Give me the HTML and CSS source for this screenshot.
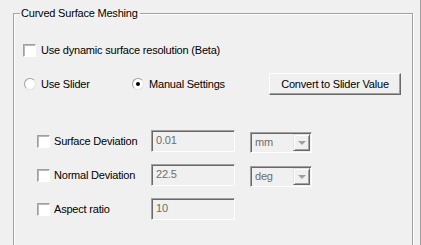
FILE: index.html
```html
<!DOCTYPE html>
<html lang="en">
<head>
    <meta charset="UTF-8">
    <title>Curved Surface Meshing</title>
    <link rel="stylesheet" href="styles.css">
</head>
<body>
    <div class="window">
        <fieldset class="group">
            <legend>Curved Surface Meshing</legend>

            <div class="row row-dynamic">
                <span class="check"></span>
                <span class="text">Use dynamic surface resolution (Beta)</span>
            </div>

            <div class="row row-mode">
                <span class="radio-item">
                    <span class="radio"></span>
                    <span class="text">Use Slider</span>
                </span>
                <span class="radio-item">
                    <span class="radio checked"></span>
                    <span class="text">Manual Settings</span>
                </span>
                <button class="btn">Convert to Slider Value</button>
            </div>

            <div class="params">
                <div class="param">
                    <span class="check"></span>
                    <span class="param-label">Surface Deviation</span>
                    <span class="textbox">0.01</span>
                    <span class="combo">
                        <span class="combo-text">mm</span>
                        <span class="combo-btn"><span class="arrow"></span></span>
                    </span>
                </div>
                <div class="param">
                    <span class="check"></span>
                    <span class="param-label">Normal Deviation</span>
                    <span class="textbox">22.5</span>
                    <span class="combo">
                        <span class="combo-text">deg</span>
                        <span class="combo-btn"><span class="arrow"></span></span>
                    </span>
                </div>
                <div class="param">
                    <span class="check"></span>
                    <span class="param-label">Aspect ratio</span>
                    <span class="textbox">10</span>
                </div>
            </div>
        </fieldset>
    </div>
</body>
</html>
```

FILE: styles.css
```css
html, body {
    margin: 0;
    padding: 0;
    background-color: #f0f0f0;
    overflow: hidden;
}

body {
    font-family: 'Liberation Sans', Arial, sans-serif;
    font-size: 11px;
    line-height: 13px;
    letter-spacing: -0.2px;
    color: #000;
}

.window {
    box-sizing: border-box;
    width: 421px;
    height: 245px;
    overflow: hidden;
    border-right: 1px solid #a0a0a0;
}

.group {
    box-sizing: border-box;
    margin: 7px 0 0 13px;
    padding: 0;
    width: 400px;
    height: 238px;
    border: 1px solid #a0a0a0;
    border-bottom: none;
    box-shadow: 1px 0 0 #fff, inset 1px 1px 0 #fff;
}

.group legend {
    margin-left: 6px;
    padding: 0 2px 0 1px;
    line-height: 13px;
}

.row {
    display: flex;
    align-items: center;
    white-space: nowrap;
}

.row-dynamic {
    margin-top: 24px;
    padding-left: 9px;
    height: 13px;
}

.row-mode {
    margin-top: 16px;
    padding-left: 10px;
    padding-right: 11px;
    height: 22px;
}

.text {
    margin-left: 5px;
}

.check {
    display: inline-block;
    box-sizing: border-box;
    width: 13px;
    height: 13px;
    flex: none;
    background-color: #fff;
    border: 1px solid;
    border-color: #a0a0a0 #fff #fff #a0a0a0;
    box-shadow: inset 1px 1px 0 #b8b8b8;
}

.radio-item {
    display: flex;
    align-items: center;
    flex: none;
    width: 108px;
}

.radio {
    position: relative;
    display: inline-block;
    box-sizing: border-box;
    width: 12px;
    height: 12px;
    flex: none;
    border-radius: 50%;
    background-color: #fff;
    border: 1px solid;
    border-color: #a0a0a0 #e3e3e3 #e3e3e3 #a0a0a0;
}

.radio.checked::after {
    content: "";
    position: absolute;
    left: 3px;
    top: 3px;
    width: 4px;
    height: 4px;
    border-radius: 50%;
    background-color: #000;
}

.btn {
    margin-left: auto;
    flex: none;
    box-sizing: border-box;
    width: 132px;
    height: 22px;
    padding: 0;
    font-family: inherit;
    font-size: 11px;
    letter-spacing: -0.2px;
    color: #000;
    background-color: #f0f0f0;
    border: 1px solid;
    border-color: #fff #696969 #696969 #fff;
    box-shadow: inset -1px -1px 0 #a0a0a0;
}

.params {
    margin-top: 35px;
    padding-left: 23px;
}

.param {
    display: flex;
    align-items: center;
    height: 22px;
    margin-bottom: 12px;
    white-space: nowrap;
}

.param-label {
    flex: none;
    width: 97px;
    margin-left: 4px;
}

.textbox {
    flex: none;
    box-sizing: border-box;
    width: 84px;
    height: 22px;
    padding: 3px 0 0 4px;
    color: #6d6d6d;
    background-color: #f0f0f0;
    border: 1px solid;
    border-color: #a0a0a0 #fff #fff #a0a0a0;
    box-shadow: inset 1px 1px 0 #696969;
}

.combo {
    display: flex;
    align-items: center;
    flex: none;
    box-sizing: border-box;
    width: 62px;
    height: 21px;
    margin-left: 15px;
    margin-top: 2px;
    background-color: #f0f0f0;
    border: 1px solid;
    border-color: #a0a0a0 #fff #fff #a0a0a0;
    box-shadow: inset 1px 1px 0 #696969;
}

.combo-text {
    flex: 1;
    padding-left: 4px;
    color: #6d6d6d;
}

.combo-btn {
    display: flex;
    align-items: center;
    justify-content: center;
    box-sizing: border-box;
    width: 17px;
    height: 17px;
    margin-right: 1px;
    margin-top: 1px;
    background-color: #f0f0f0;
    border: 1px solid;
    border-color: #e3e3e3 #696969 #696969 #e3e3e3;
    box-shadow: inset 1px 1px 0 #fff, inset -1px -1px 0 #a0a0a0;
}

.arrow {
    width: 0;
    height: 0;
    border-left: 4px solid transparent;
    border-right: 4px solid transparent;
    border-top: 4px solid #a0a0a0;
}
```
